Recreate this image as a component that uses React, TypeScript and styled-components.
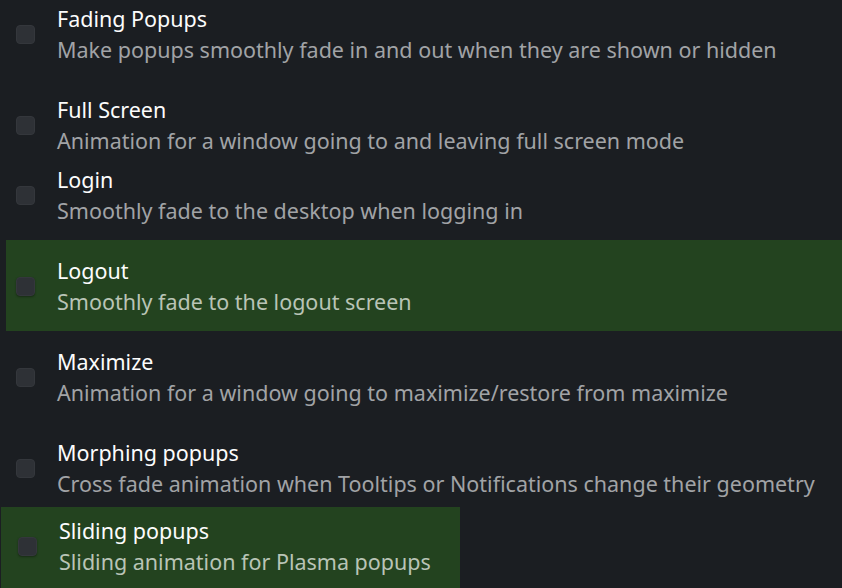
import React from 'react';
import styled, { createGlobalStyle } from 'styled-components';

const GlobalStyle = createGlobalStyle`
  html, body {
    margin: 0;
    padding: 0;
    background: #1b1e22;
    overflow: hidden;
  }
  body {
    font-family: 'Noto Sans', 'Open Sans', sans-serif;
  }
`;

const List = styled.div`
  width: 842px;
  height: 588px;
  overflow: hidden;
  display: flex;
  flex-direction: column;
`;

const Row = styled.div<{ $height: number; $highlight?: boolean }>`
  flex: none;
  box-sizing: border-box;
  height: ${(p) => p.$height}px;
  padding-top: 15px;
  margin-left: ${(p) => (p.$highlight ? 6 : 0)}px;
  background: ${(p) => (p.$highlight ? '#23431f' : 'transparent')};
`;

const Entry = styled.div<{ $indent: number }>`
  display: flex;
  align-items: center;
  padding-left: ${(p) => p.$indent}px;
`;

const CheckBox = styled.span<{ $raised?: boolean }>`
  flex: none;
  width: 19px;
  height: 19px;
  box-sizing: border-box;
  border-radius: 4px;
  background: #2e3136;
  border: 1px solid #34373c;
  box-shadow: ${(p) => (p.$raised ? '0 1px 2px rgba(0, 0, 0, 0.35)' : 'none')};
`;

const Texts = styled.div<{ $gap: number }>`
  display: flex;
  flex-direction: column;
  margin-left: ${(p) => p.$gap}px;
`;

const Title = styled.div`
  font-size: 21.5px;
  line-height: 31px;
  color: #fcfcfc;
  white-space: nowrap;
`;

const Description = styled.div<{ $onGreen?: boolean }>`
  font-size: 21.5px;
  line-height: 31px;
  color: ${(p) => (p.$onGreen ? '#b9c4b6' : '#a1a3a6')};
  white-space: nowrap;
`;

const Highlight = styled.div`
  flex: none;
  box-sizing: border-box;
  margin-top: 7px;
  margin-left: 1px;
  width: 459px;
  height: 81px;
  padding-top: 8px;
  background: #23431f;
`;

type Effect = {
  title: string;
  description: string;
  height: number;
  highlight?: boolean;
};

const effects: Effect[] = [
  {
    title: 'Fading Popups',
    description: 'Make popups smoothly fade in and out when they are shown or hidden',
    height: 91,
  },
  {
    title: 'Full Screen',
    description: 'Animation for a window going to and leaving full screen mode',
    height: 70,
  },
  {
    title: 'Login',
    description: 'Smoothly fade to the desktop when logging in',
    height: 91,
  },
  {
    title: 'Logout',
    description: 'Smoothly fade to the logout screen',
    height: 91,
    highlight: true,
  },
  {
    title: 'Maximize',
    description: 'Animation for a window going to maximize/restore from maximize',
    height: 91,
  },
  {
    title: 'Morphing popups',
    description: 'Cross fade animation when Tooltips or Notifications change their geometry',
    height: 78,
  },
];

const App: React.FC = () => {
  return (
    <>
      <GlobalStyle />
      <List>
        {effects.map((e, i) => (
          <Row
            key={e.title}
            $height={e.height}
            $highlight={e.highlight}
            style={i === 0 ? { marginTop: -12 } : undefined}
          >
            <Entry $indent={e.highlight ? 10 : 16}>
              <CheckBox $raised={e.highlight} />
              <Texts $gap={22}>
                <Title>{e.title}</Title>
                <Description $onGreen={e.highlight}>{e.description}</Description>
              </Texts>
            </Entry>
          </Row>
        ))}
        <Highlight>
          <Entry $indent={17}>
            <CheckBox $raised />
            <Texts $gap={22}>
              <Title>Sliding popups</Title>
              <Description $onGreen>Sliding animation for Plasma popups</Description>
            </Texts>
          </Entry>
        </Highlight>
      </List>
    </>
  );
};

export default App;
